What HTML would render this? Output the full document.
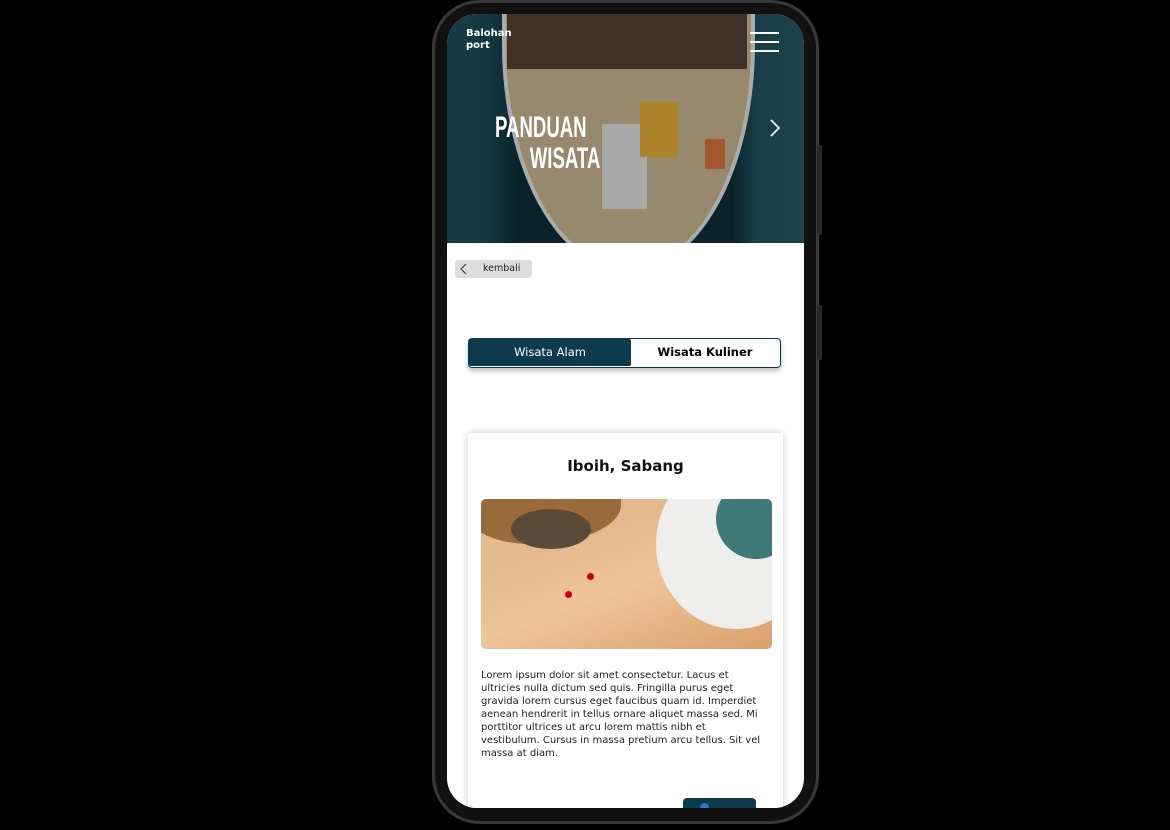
<!DOCTYPE html>
<html><head><style>
body{margin:0;width:1170px;height:830px;background:#000;position:relative;overflow:hidden;font-family:"DejaVu Sans","Liberation Sans",sans-serif}
.phone{position:absolute;left:432px;top:0;width:387px;height:824px;border-radius:48px;background:#111;border:3px solid #3a3a3a;box-sizing:border-box}
.btn{position:absolute;left:817px;width:5px;background:#2a2a2a;border-radius:2px}
.screen{position:absolute;left:447px;top:14px;width:357px;height:794px;border-radius:30px;overflow:hidden;background:#fff}
.hero{position:absolute;left:0;top:0;width:357px;height:229px;overflow:hidden;background:linear-gradient(90deg,#1d4b57 0%,#184450 12%,#0c2a33 20%,#0c2a33 80%,#1d4b57 86%,#22525d 100%)}
.boat{position:absolute;left:55px;top:-10px;width:245px;height:260px;background:#b9a787;border-radius:0 0 50% 50%/0 0 85% 85%;border:4px solid #cfd2d0}
</style></head><body>
<div class="phone"></div>
<div class="btn" style="top:145px;height:90px"></div>
<div class="btn" style="top:305px;height:55px"></div>
<div class="screen">
 <div class="hero">
  <div class="boat"></div>
  <div style="position:absolute;left:60px;top:0;width:240px;height:55px;background:#4d3c30"></div>
  <div style="position:absolute;left:155px;top:110px;width:45px;height:85px;background:#cfcfcf"></div>
  <div style="position:absolute;left:193px;top:88px;width:38px;height:55px;background:#d4a032"></div>
  <div style="position:absolute;left:258px;top:125px;width:20px;height:30px;background:#c96a3a"></div>
  <div style="position:absolute;inset:0;background:rgba(0,0,0,.18)"></div>
  <div style="position:absolute;left:19px;top:14px;color:#fff;font-size:10px;font-weight:bold;line-height:12px">Balohan<br>port</div>
  <div style="position:absolute;left:303px;top:18px;width:29px;height:2px;background:#fff;box-shadow:0 9px 0 #fff,0 18px 0 #fff"></div>
  <div style="position:absolute;left:48px;top:98px;color:#fff;font-family:'Liberation Sans',sans-serif;font-weight:bold;font-size:30px;line-height:31px;transform:scaleX(.62);transform-origin:left">PANDUAN<br><span style="padding-left:56px">WISATA</span></div>
  <svg style="position:absolute;left:322px;top:104px" width="12" height="20"><path d="M2 2 L10 10 L2 18" stroke="#fff" stroke-width="1.6" fill="none"/></svg>
 </div>
 <div style="position:absolute;left:8px;top:246px;width:77px;height:18px;background:#ddd;border-radius:3px;font-size:9.5px;color:#222;line-height:18px"><svg style="position:absolute;left:5px;top:3px" width="8" height="12"><path d="M6 1 L1 6 L6 11" stroke="#333" fill="none"/></svg><span style="position:absolute;left:28px">kembali</span></div>
 <div style="position:absolute;left:21px;top:324px;width:313px;height:30px;border:1.5px solid #0d3a4d;border-radius:4px;box-sizing:border-box;box-shadow:0 3px 5px rgba(0,0,0,.25);font-size:11.5px">
  <div style="position:absolute;left:0;top:0;width:162px;height:27px;background:#0d3a4d;color:#fff;text-align:center;line-height:27px;border-radius:2px">Wisata Alam</div>
  <div style="position:absolute;left:162px;top:0;width:148px;height:27px;color:#000;font-weight:bold;text-align:center;line-height:27px">Wisata Kuliner</div>
 </div>
 <div style="position:absolute;left:21px;top:419px;width:315px;height:400px;background:#fff;box-shadow:0 0 8px rgba(0,0,0,.2);border-radius:3px">
  <div style="position:absolute;top:24px;width:100%;text-align:center;font-size:15px;font-weight:bold;color:#111">Iboih, Sabang</div>
  <div style="position:absolute;left:13px;top:66px;width:291px;height:150px;border-radius:5px;overflow:hidden;background:linear-gradient(160deg,#e5b98f 30%,#efc49b 55%,#d9a06a 100%)">
   <div style="position:absolute;left:-10px;top:-20px;width:150px;height:65px;background:#9a6b3a;border-radius:0 0 60% 40%"></div>
   <div style="position:absolute;left:30px;top:10px;width:80px;height:40px;background:#5a4a38;border-radius:50%"></div>
   <div style="position:absolute;left:175px;top:-40px;width:160px;height:170px;background:#eeeeec;border-radius:50%"></div>
   <div style="position:absolute;left:235px;top:-20px;width:80px;height:80px;background:#3f7a78;border-radius:50%"></div>
   <div style="position:absolute;left:106px;top:74px;width:7px;height:7px;background:#c00;border-radius:50%"></div>
   <div style="position:absolute;left:84px;top:92px;width:7px;height:7px;background:#c00;border-radius:50%"></div>
  </div>
  <div style="position:absolute;left:13px;top:236px;width:300px;font-size:10px;line-height:13px;color:#222;white-space:nowrap">Lorem ipsum dolor sit amet consectetur. Lacus et<br>ultricies nulla dictum sed quis. Fringilla purus eget<br>gravida lorem cursus eget faucibus quam id. Imperdiet<br>aenean hendrerit in tellus ornare aliquet massa sed. Mi<br>porttitor ultrices ut arcu lorem mattis nibh et<br>vestibulum. Cursus in massa pretium arcu tellus. Sit vel<br>massa at diam.</div>
  <div style="position:absolute;left:215px;top:365px;width:73px;height:30px;background:#0d3a4d;border-radius:4px"><div style="position:absolute;left:17px;top:5px;width:9px;height:9px;border-radius:50%;background:#3a6fd8"></div></div>
 </div>
</div>
</body></html>
